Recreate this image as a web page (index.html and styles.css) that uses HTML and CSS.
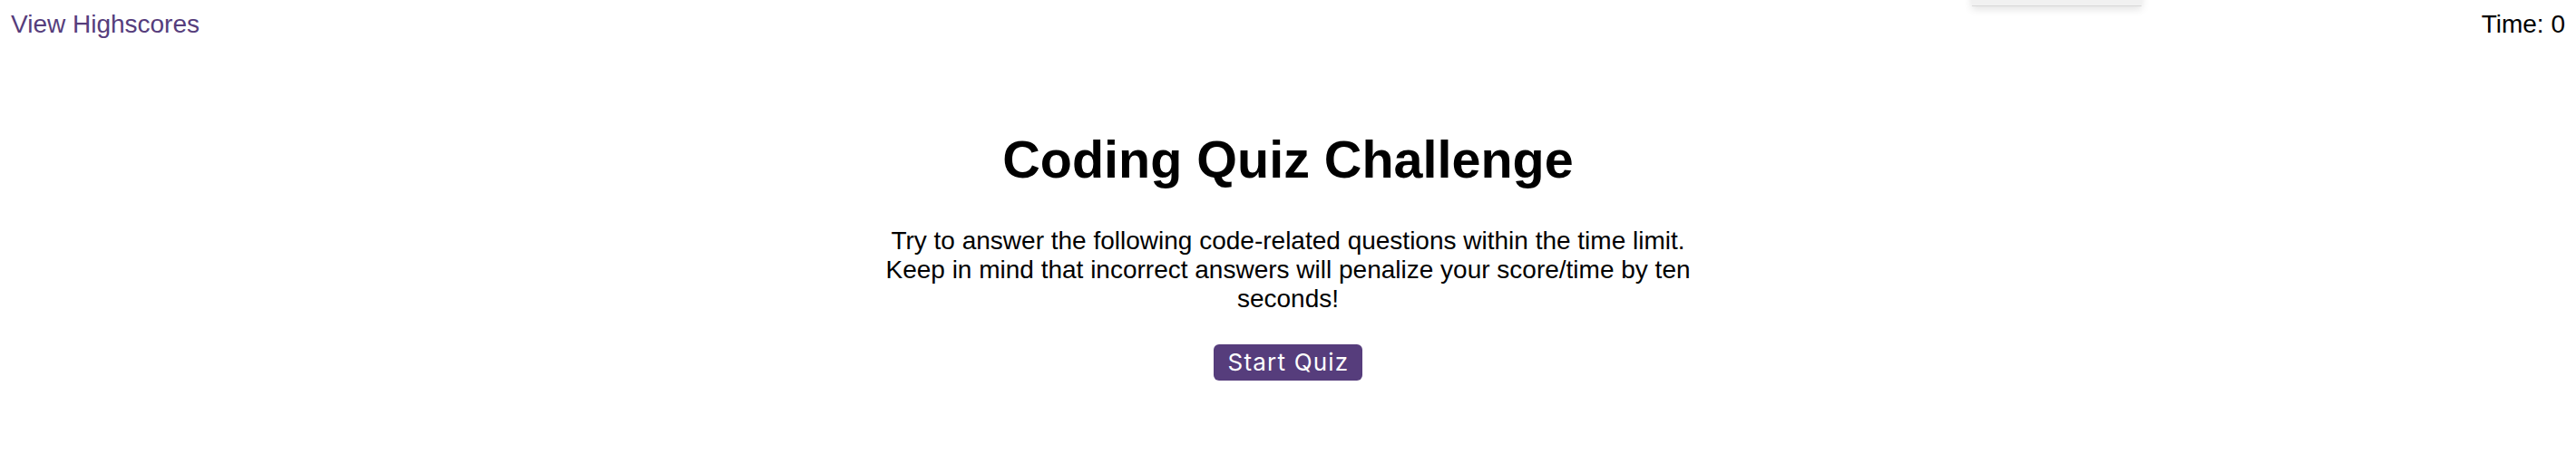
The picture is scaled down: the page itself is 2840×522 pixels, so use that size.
FILE: index.html
```html
<!DOCTYPE html>
<html lang="en">
<head>
<meta charset="utf-8">
<title>Coding Quiz Challenge</title>
<link rel="stylesheet" href="styles.css">
</head>
<body>
<div class="popup"></div>
<header class="topbar">
  <a class="highscores" href="#">View Highscores</a>
  <div class="timer">Time: 0</div>
</header>
<main class="intro">
  <h1 class="title">Coding Quiz Challenge</h1>
  <p class="lead">Try to answer the following code-related questions within the time limit. Keep in mind that incorrect answers will penalize your score/time by ten seconds!</p>
  <button class="start-btn" type="button">Start Quiz</button>
</main>
</body>
</html>
```
FILE: styles.css
```css
html, body {
  margin: 0;
  padding: 0;
  background: #ffffff;
}
body {
  font-family: "Liberation Sans", Arial, Helvetica, sans-serif;
  font-size: 28px;
  line-height: 32px;
  color: #000000;
}
.popup {
  position: absolute;
  left: 2174px;
  top: -20px;
  width: 187px;
  height: 26px;
  background: #f1f1f1;
  border-bottom: 1px solid #d8d8d8;
  box-shadow: 0 3px 10px rgba(0, 0, 0, 0.12);
}
.topbar {
  display: flex;
  justify-content: space-between;
  align-items: flex-start;
  padding: 11px 12px 0 12px;
}
.highscores {
  color: #563d7c;
  text-decoration: none;
}
.timer {
  color: #000000;
}
.intro {
  display: flex;
  flex-direction: column;
  align-items: center;
  text-align: center;
  padding-top: 100px;
}
.title {
  margin: 0 0 41px 0;
  font-size: 57.5px;
  line-height: 66px;
  font-weight: bold;
}
.lead {
  margin: 0 0 34px 0;
  max-width: 900px;
}
.start-btn {
  font-family: Inter, "Open Sans", sans-serif;
  font-size: 26px;
  line-height: 30px;
  letter-spacing: 1.2px;
  color: #ffffff;
  background: #563d7c;
  border: none;
  border-radius: 6px;
  padding: 5px 15px 5px 16px;
  cursor: pointer;
}
```
